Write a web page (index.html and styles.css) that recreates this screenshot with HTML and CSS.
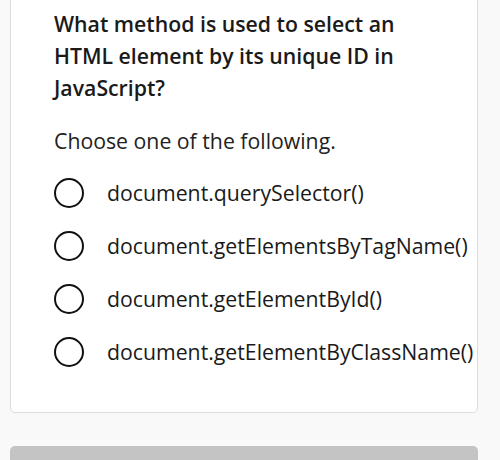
FILE: index.html
```html
<!DOCTYPE html>
<html>
<head>
<meta charset="utf-8">
<link rel="stylesheet" href="styles.css">
</head>
<body>
<div class="page">
  <div class="card">
    <h2 class="question">What method is used to select an HTML element by its unique ID in JavaScript?</h2>
    <p class="prompt">Choose one of the following.</p>
    <ul class="options">
      <li class="option"><span class="radio"></span><span class="label">document.querySelector()</span></li>
      <li class="option"><span class="radio"></span><span class="label">document.getElementsByTagName()</span></li>
      <li class="option"><span class="radio"></span><span class="label">document.getElementById()</span></li>
      <li class="option"><span class="radio"></span><span class="label">document.getElementByClassName()</span></li>
    </ul>
  </div>
  <div class="submit-bar"></div>
</div>
</body>
</html>
```
FILE: styles.css
```css
html, body {
  margin: 0;
  padding: 0;
  background: #f9f9f9;
  font-family: "Open Sans", "Liberation Sans", sans-serif;
  color: #1a1a1a;
}
.page {
  padding: 0 22px 0 10px;
  display: flex;
  flex-direction: column;
  gap: 33px;
}
.card {
  margin-top: -40px;
  background: #fff;
  border: 1px solid #dcdcdc;
  border-radius: 5px;
  padding: 47px 0 44px 43px;
}
.question {
  margin: 0;
  font-size: 21.25px;
  font-weight: 600;
  line-height: 32px;
  width: 360px;
}
.prompt {
  margin: 21px 0 0;
  font-size: 21.25px;
  line-height: 32px;
  color: #222;
}
.options {
  list-style: none;
  margin: 20px 0 0;
  padding: 0;
  display: flex;
  flex-direction: column;
  gap: 21px;
}
.option {
  display: flex;
  align-items: center;
  gap: 23px;
  height: 32px;
  white-space: nowrap;
}
.radio {
  flex: none;
  width: 26px;
  height: 26px;
  border: 2.5px solid #111;
  border-radius: 50%;
}
.label {
  font-size: 21.25px;
  line-height: 32px;
  color: #1a1a1a;
}
.submit-bar {
  height: 15px;
  background: #c4c4c4;
  border-radius: 5px 5px 0 0;
}
```
